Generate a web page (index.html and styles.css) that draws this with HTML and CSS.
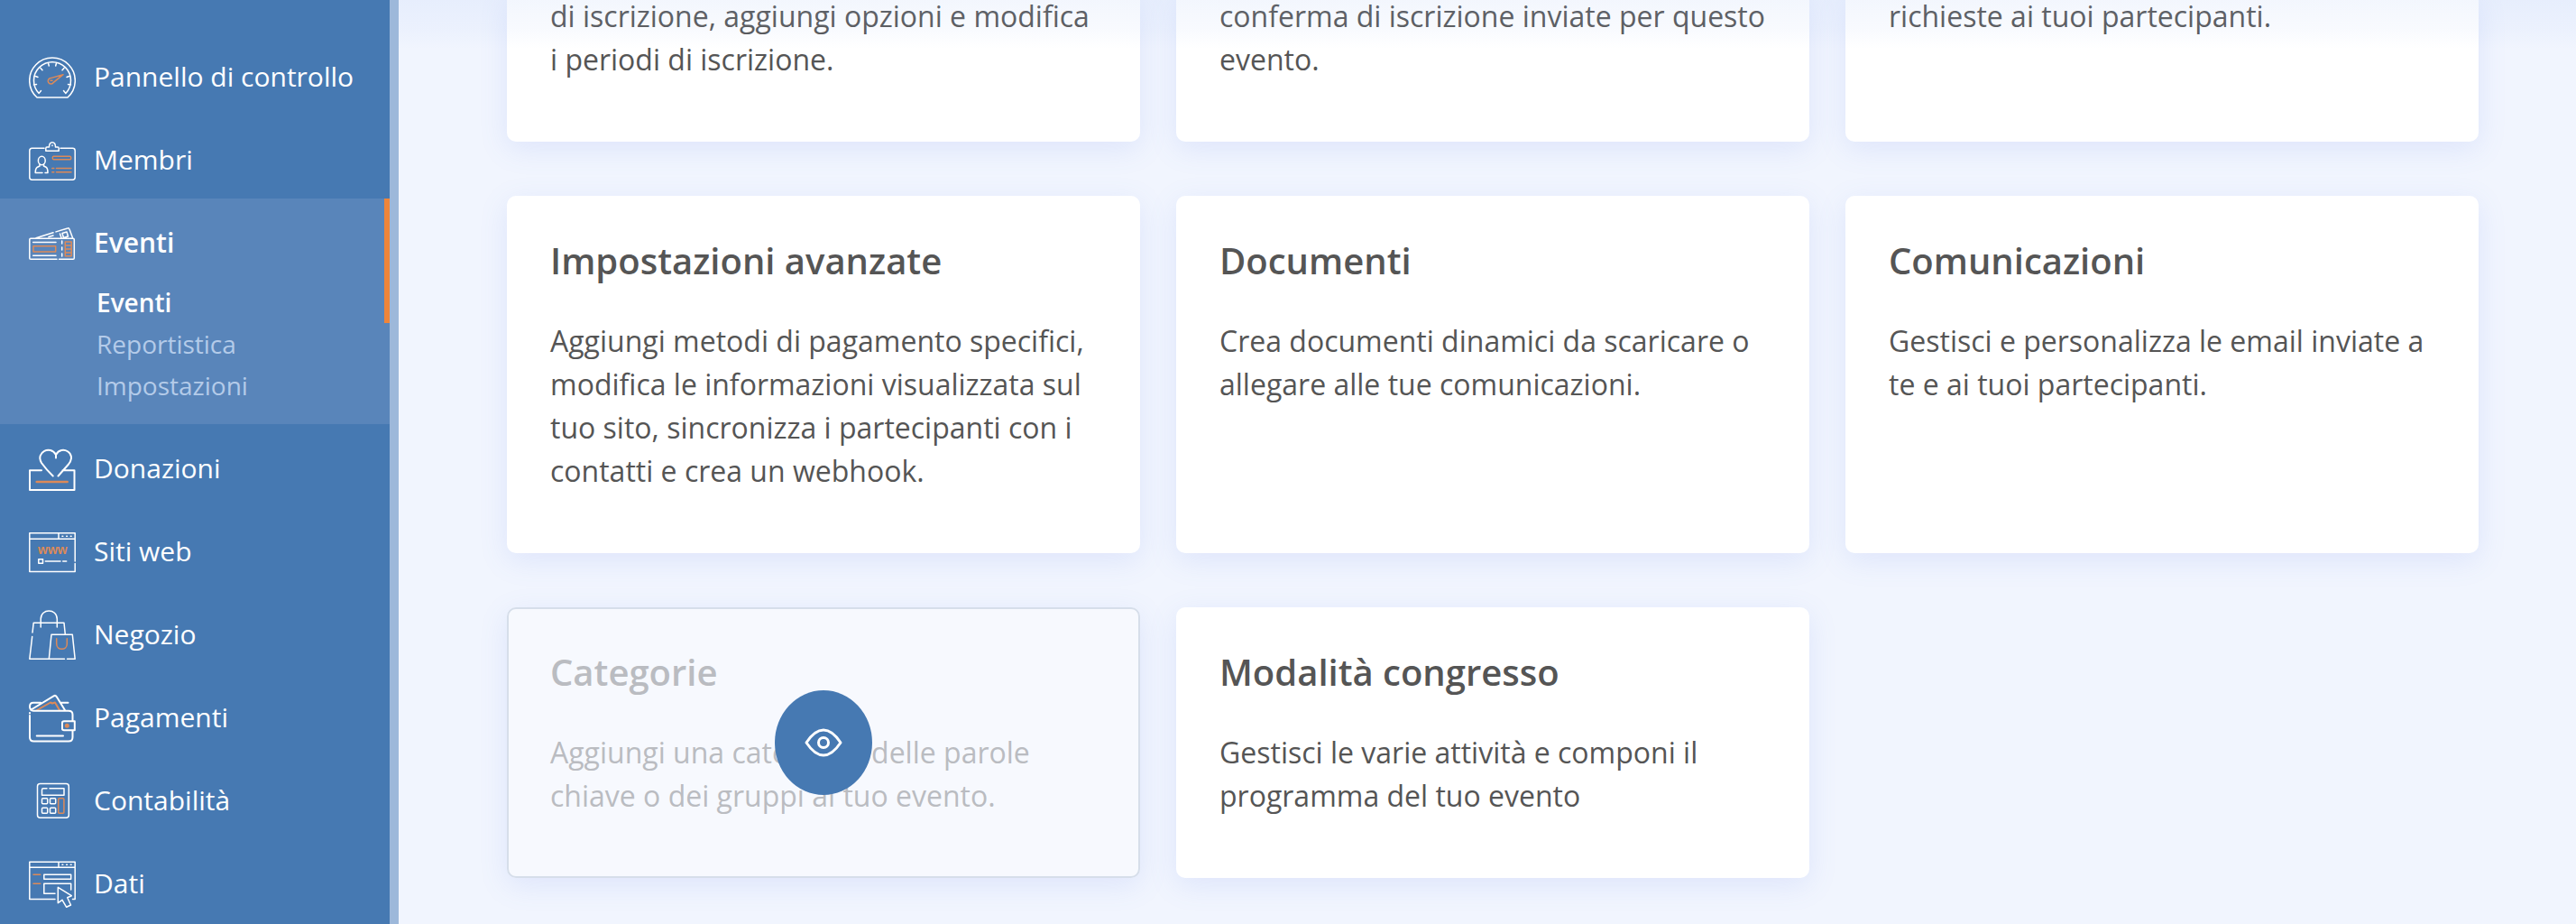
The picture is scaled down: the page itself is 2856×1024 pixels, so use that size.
FILE: index.html
```html
<!DOCTYPE html>
<html lang="it">
<head>
<meta charset="utf-8">
<meta name="viewport" content="width=device-width, initial-scale=1">
<title>Eventi</title>
<link rel="stylesheet" href="styles.css">
</head>
<body>
<div class="layout">
  <nav class="sidebar" aria-label="Menu principale">
    <ul class="menu">
      <li class="menu-item"><a class="menu-link" href="#pannello">
        <svg class="icon" viewBox="0 0 52 56" aria-hidden="true"><path d="M9 50A25.3 25.3 0 1 1 43 50Z"/><path d="M13.5 42.5L11.2 45.4A20.5 20.5 0 1 1 40.8 45.4L38.5 42.5M5.5 36l3-.5M7.500 26.500l2.500 1M13 17.500l2 2.200M21.500 12l.8 3M30.500 12l-.8 3M39 17.500l-2 2.200M44.500 26.500l-2.500 1M46.500 36l-3-.5"/><path class="accent" d="M24 28.600L38 24.700L27 33.700A3.200 3.200 0 1 1 24 28.600ZM24 31.300h2"/></svg>
        <span class="label">Pannello di controllo</span></a></li>
      <li class="menu-item"><a class="menu-link" href="#membri">
        <svg class="icon" viewBox="0 0 52 56" aria-hidden="true"><path d="M17 14.300H3.500Q.8 14.300 .8 17V46.500Q.8 49.200 3.500 49.200H48.500Q51.200 49.200 51.200 46.500V17Q51.200 14.300 48.500 14.300H35M20 13H22.500C22.500 6 29.500 6 29.500 13H32Q33.200 13 33.200 14.500V17.200H18.800V14.500Q18.800 13 20 13ZM26 11v.5"/><ellipse cx="14.300" cy="28" rx="3.900" ry="4.800"/><path d="M12 32v2L9 35.500Q7.200 37 7.200 41.500H15M18 41.500H21Q21 37 19.500 35.500L16.500 34V32"/><path class="accent" d="M27.300 23.200H45.700Q46.700 23.200 46.700 25T45.700 26.700H27.300Q26.300 26.700 26.300 25T27.300 23.200ZM25.800 36.500h2M30.500 36.500H47M25.800 40.800h2M30.500 40.800H47"/></svg>
        <span class="label">Membri</span></a></li>
      <li class="menu-item active"><a class="menu-link" href="#eventi">
        <svg class="icon" viewBox="0 0 52 56" aria-hidden="true"><path d="M31 45.300H2Q.8 45.300 .8 44V23.500Q.8 22.300 2 22.300H49Q50.300 22.300 50.300 23.500V44Q50.300 45.300 49 45.300H33.500M8 21.800L27 15.800M30 14.900L43 11Q44.500 10.500 45 12L48.700 22M22 20.500l5-1.500M37 16.500l5-1.500 1.500 5-5 1.500zM34.500 17l1.500 4.500M4.700 26.500H30M4.700 41.200H30"/><path stroke-dasharray="3 4" d="M36.700 25V44"/><path class="accent" d="M5 30.700H29.700V37H5ZM40.300 26H47.200V41.700H40.300ZM40.300 30H47M40.300 34H47M40.300 38H47"/></svg>
        <span class="label">Eventi</span></a>
        <ul class="submenu">
          <li><a class="sub-link current" href="#eventi-elenco">Eventi</a></li>
          <li><a class="sub-link" href="#reportistica">Reportistica</a></li>
          <li><a class="sub-link" href="#impostazioni">Impostazioni</a></li>
        </ul>
      </li>
      <li class="menu-item"><a class="menu-link" href="#donazioni">
        <svg class="icon" viewBox="0 0 52 56" aria-hidden="true"><g stroke-width="2"><path d="M14 29.300H1V51H50.500V29.300H37.500M32.500 35.500L44 22.500C54 10 36 .5 30 12V15.500M30 12C24 1 7 9 14 21Q19 28 26.700 35.500"/></g><path class="accent" stroke-width="2.500" d="M8.700 42H42.700"/></svg>
        <span class="label">Donazioni</span></a></li>
      <li class="menu-item"><a class="menu-link" href="#siti">
        <svg class="icon" viewBox="0 0 52 56" aria-hidden="true"><path d="M51.200 38V6.800H.8V49.600H51.200V40.500M.8 13.300H51M33 7V13M37 10.300h.8M41.700 10.300h.8M46.300 10.300h.8M10.800 35.800h4.700v4.500h-4.700zM18.300 38H35M37.700 38H41.700"/><text class="icon-text" x="10" y="30">www</text></svg>
        <span class="label">Siti web</span></a></li>
      <li class="menu-item"><a class="menu-link" href="#negozio">
        <svg class="icon" viewBox="0 0 52 56" aria-hidden="true"><path d="M22 54.300H.8L3.700 29.500M4 25L5.200 14.300H39L40.300 27M13.200 19V10C13.200-2 31.300-2 31.300 10V19M39.500 54.300H22.300L25 27.300H48.300L51.200 54.300H42.500"/><path class="accent" d="M30.700 31.700V37.500C30.700 45.200 42.300 45.200 42.300 37.500V31.700"/></svg>
        <span class="label">Negozio</span></a></li>
      <li class="menu-item"><a class="menu-link" href="#pagamenti">
        <svg class="icon" viewBox="0 0 52 56" aria-hidden="true"><path class="accent" stroke-width="2" d="M9 19L24 10.500L26 11.500L29 10.500L34 19"/><g stroke-width="2"><path d="M1 25V49Q1 53.500 5.500 53.500H44Q48.500 53.500 48.500 49V41.300M48.500 31V24Q48.500 19.700 44 19.700H5Q1 19.700 1 15Q1 10.800 5 10.800H13M35 10.800H43.500M2.500 18.500L27.500 3.300Q29.500 2.200 30.700 4L40 19M1 22v.5M39 31.300H50.800V41.300H39Q37 41.300 37 39.500V33Q37 31.300 39 31.300ZM8.700 47.500H38"/></g><circle class="accent-fill" cx="42.300" cy="36.300" r="2.500"/></svg>
        <span class="label">Pagamenti</span></a></li>
      <li class="menu-item"><a class="menu-link" href="#contabilita">
        <svg class="icon" viewBox="0 0 52 56" aria-hidden="true"><rect x="9.500" y="8.500" width="34.800" height="37.800" rx="3"/><path d="M20 13.800H16Q14.500 13.800 14.500 15.500V21.200H39V13.800H23"/><rect x="14.500" y="24.800" width="6.200" height="6" rx="1"/><rect x="23.500" y="24.800" width="6.200" height="6" rx="1"/><rect x="14.500" y="35.200" width="6.200" height="6" rx="1"/><rect x="23.500" y="35.200" width="6.200" height="6" rx="1"/><rect class="accent" x="32.700" y="24.800" width="6.200" height="16.400" rx="1"/></svg>
        <span class="label">Contabilità</span></a></li>
      <li class="menu-item"><a class="menu-link" href="#dati">
        <svg class="icon" viewBox="0 0 52 56" aria-hidden="true"><path d="M29 44.600H.8V3.200H51.200V44.600H48.500M.8 9.300H51M33 3.500V9M37 6.300h.8M41.700 6.300h.8M46.300 6.300h.8M16.800 17.300H46.700V22.300H16.800ZM46.700 34V27.200H16.800V38.300H29M32.300 31.300V48.700L37 45.300L41.700 53.300L46.500 51L42.700 42.700L47.300 40.700Z"/><path class="accent" d="M5 17.200H12.700M5 27.200H12.700"/></svg>
        <span class="label">Dati</span></a></li>
    </ul>
  </nav>

  <main class="content">
    <div class="cards">
      <article class="card clipped"><p class="card-text">di iscrizione, aggiungi opzioni e modifica i&nbsp;periodi di iscrizione.</p></article>
      <article class="card clipped"><p class="card-text">conferma di iscrizione inviate per questo evento.</p></article>
      <article class="card clipped"><p class="card-text">richieste ai tuoi partecipanti.</p></article>
      <article class="card">
        <h2 class="card-title">Impostazioni avanzate</h2>
        <p class="card-text">Aggiungi metodi di pagamento specifici, modifica le informazioni visualizzata sul tuo sito, sincronizza i partecipanti con i contatti e crea un webhook.</p>
      </article>
      <article class="card">
        <h2 class="card-title">Documenti</h2>
        <p class="card-text">Crea documenti dinamici da scaricare o allegare alle tue comunicazioni.</p>
      </article>
      <article class="card">
        <h2 class="card-title">Comunicazioni</h2>
        <p class="card-text">Gestisci e personalizza le email inviate a te e ai tuoi partecipanti.</p>
      </article>
      <article class="card hidden-card">
        <h2 class="card-title">Categorie</h2>
        <p class="card-text">Aggiungi una categoria, delle parole chiave o dei gruppi al tuo evento.</p>
        <button class="show-button" type="button" aria-label="Mostra">
          <svg class="eye" viewBox="0 0 42 34" aria-hidden="true"><path d="M2 17C8 8 14 3 21 3S34 8 40 17C34 26 28 31 21 31S8 26 2 17Z"/><circle cx="21" cy="17" r="5.500"/></svg>
        </button>
      </article>
      <article class="card">
        <h2 class="card-title">Modalità congresso</h2>
        <p class="card-text">Gestisci le varie attività e componi il programma del tuo evento</p>
      </article>
    </div>
  </main>
</div>
</body>
</html>
```

FILE: styles.css
```css
* {
  box-sizing: border-box;
}

body {
  margin: 0;
  background: #f1f5fe;
  color: #555555;
  font-family: "Open Sans", "Noto Sans", sans-serif;
}

.layout {
  display: flex;
  height: 100vh;
  overflow: hidden;
}

/* Sidebar */
.sidebar {
  flex: none;
  width: 442px;
  padding-top: 36px;
  border-right: 10px solid #9db8da;
  background: #4679b2;
  overflow: hidden;
}

.menu,
.submenu {
  margin: 0;
  padding: 0;
  list-style: none;
}

.menu-item {
  position: relative;
  padding-top: 8px;
}

.menu-link {
  display: flex;
  align-items: center;
  gap: 20px;
  height: 84px;
  padding-left: 32px;
  color: #ffffff;
  font-size: 30px;
  text-decoration: none;
}

.label {
  padding-bottom: 4px;
}

.active {
  padding-bottom: 20px;
  background: #5985ba;
}

.active::after {
  content: "";
  position: absolute;
  top: 0;
  right: 0;
  width: 6px;
  height: 138px;
  background: #f08539;
}

.active .menu-link,
.sub-link.current {
  color: #ffffff;
  font-weight: 600;
}

.sub-link {
  display: block;
  padding-left: 107px;
  color: #b4cbe9;
  font-size: 28px;
  line-height: 46px;
  text-decoration: none;
}

.icon {
  flex: none;
  width: 52px;
  height: 56px;
  fill: none;
  stroke: #ffffff;
  stroke-width: 1.5;
  stroke-linecap: round;
  stroke-linejoin: round;
}

.accent {
  stroke: #dc8a59;
}

.accent-fill {
  fill: #dc8a59;
  stroke: none;
}

.icon-text {
  fill: #dc8a59;
  stroke: none;
  font: 700 14px "Liberation Sans", sans-serif;
}

/* Cards */
.content {
  position: relative;
  flex: 1;
  padding: 0 108px 50px 120px;
}

.content::before {
  content: "";
  position: absolute;
  inset: 0 0 auto;
  z-index: 1;
  height: 54px;
  background: linear-gradient(rgba(170, 195, 245, 0.14), rgba(170, 195, 245, 0.08) 60%, rgba(170, 195, 245, 0));
  pointer-events: none;
}

.cards {
  display: grid;
  grid-template-columns: repeat(3, 1fr);
  gap: 60px 40px;
  margin-top: -6px;
}

.card {
  position: relative;
  padding: 46px 46px 67px 48px;
  border-radius: 10px;
  background: #ffffff;
  box-shadow: 0 8px 32px rgba(90, 120, 230, 0.13);
}

.clipped {
  padding-top: 0;
  border-radius: 0 0 10px 10px;
}

.card-title {
  margin: 0 0 39px;
  font-size: 40px;
  font-weight: 600;
  line-height: 52px;
}

.card-text {
  margin: 0;
  font-size: 32px;
  line-height: 48px;
}

.hidden-card {
  background: #f7f9fe;
  outline: 2px solid #d6deea;
  outline-offset: -2px;
  color: #babcc1;
}

.show-button {
  position: absolute;
  top: 50%;
  left: 50%;
  display: grid;
  place-items: center;
  width: 108px;
  height: 116px;
  padding: 0;
  border: 0;
  border-radius: 50%;
  background: #4679b2;
  transform: translate(-50%, -50%);
  cursor: pointer;
}

.eye {
  width: 42px;
  height: 34px;
  fill: none;
  stroke: #ffffff;
  stroke-width: 3;
  stroke-linejoin: round;
}
```
